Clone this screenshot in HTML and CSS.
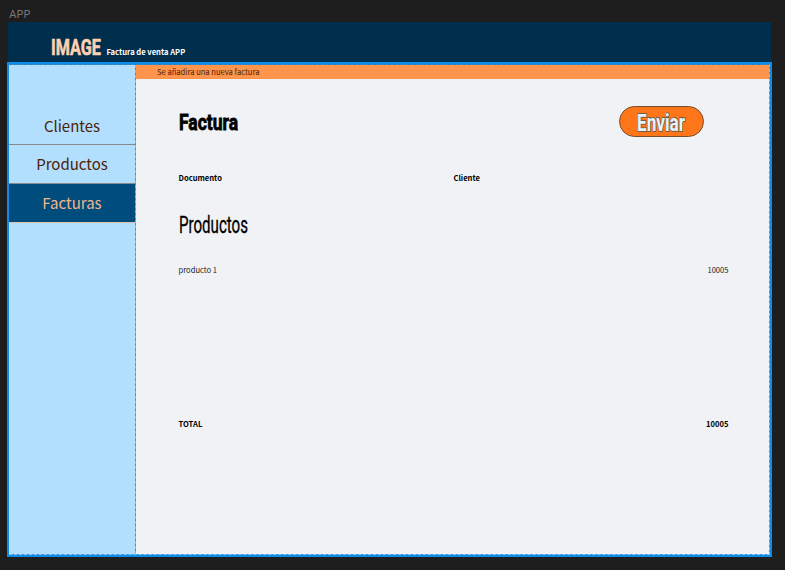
FILE: index.html
```html
<!DOCTYPE html>
<html lang="es">
<head>
<meta charset="utf-8">
<title>APP</title>
<link rel="stylesheet" href="styles.css">
</head>
<body>
<div class="label">APP</div>
<header class="header">
  <svg class="logo" width="52" height="24"><text transform="translate(2 20) scale(.72 1)" textLength="69.4" lengthAdjust="spacingAndGlyphs">IMAGE</text></svg>
  <span class="tagline">Factura de venta APP</span>
</header>
<div class="frame">
  <div class="workspace">
    <nav class="sidebar">
      <a class="item">Clientes</a>
      <a class="item">Productos</a>
      <a class="item active">Facturas</a>
    </nav>
    <main class="main">
      <div class="notice">Se añadira una nueva factura</div>
      <div class="content">
        <div class="heading">
          <svg class="title" width="70" height="31"><text x="0" y="24" textLength="59" lengthAdjust="spacingAndGlyphs">Factura</text></svg>
          <button class="send"><svg width="54" height="29"><text x="3" y="24" textLength="48" lengthAdjust="spacingAndGlyphs">Enviar</text></svg></button>
        </div>
        <div class="fields"><span>Documento</span><span>Cliente</span></div>
        <svg class="subtitle" width="80" height="32"><text x="0" y="24" textLength="69" lengthAdjust="spacingAndGlyphs">Productos</text></svg>
        <div class="row"><span>producto 1</span><span>10005</span></div>
        <div class="row total"><span>TOTAL</span><span>10005</span></div>
      </div>
    </main>
  </div>
</div>
</body>
</html>
```
FILE: styles.css
```css
* { box-sizing: border-box; }
body {
  margin: 0;
  width: 785px;
  height: 570px;
  overflow: hidden;
  background: #1e1e1e;
  font-family: "Noto Sans CJK JP", sans-serif;
  font-size: 7.6px;
  color: #000;
}
svg { display: block; overflow: visible; font-family: Roboto, sans-serif; }
.label {
  height: 22px;
  padding: 7px 0 0 9px;
  font: 11px/14px Inter, sans-serif;
  color: #777;
}
.header {
  display: flex;
  align-items: flex-start;
  width: 763px;
  height: 40px;
  margin-left: 8px;
  padding: 13px 0 0 41px;
  background: #002f4d;
}
.logo {
  font-size: 22.5px;
  font-weight: 700;
  fill: #ffd0b0;
  stroke: #ffd0b0;
  stroke-width: .6px;
}
.tagline { margin: 11px 0 0 5.5px; line-height: 12px; font-weight: 700; color: #fff; }
.frame {
  width: 765px;
  height: 495px;
  margin-left: 7px;
  border: 2px solid #0d8ce9;
}
.workspace {
  display: flex;
  height: 100%;
  border: 1px dashed #8cc4ee;
  border-top-color: #2f80c0;
  border-left: 0;
  background: #2d92df;
}
.sidebar {
  width: 126px;
  padding-top: 41px;
  background: #b3dfff;
}
.item {
  display: block;
  height: 39px;
  border-bottom: 1px solid #85898c;
  font-size: 15px;
  line-height: 39px;
  text-align: center;
  color: #4d2205;
}
.item + .item { line-height: 37px; }
.active { background: #004d7d; color: #f2b48c; border-bottom-color: #e2c1ac; }
.main { flex: 1; border-left: 1px dashed #b9a79c; background: #f0f2f5; background-clip: padding-box; }
.notice {
  height: 14px;
  padding-left: 21px;
  line-height: 14px;
  background: #ff944d;
  color: #4d2205;
}
.content { padding: 27px 40.5px 0 42.5px; }
.heading { display: flex; justify-content: space-between; }
.title { font-size: 22.5px; font-weight: 700; stroke: #000; stroke-width: .8px; }
.send {
  width: 85px;
  height: 31px;
  margin-right: 24.5px;
  padding: 0 0 0 14px;
  border: 1px solid #76502f;
  border-radius: 16px;
  background: #ff751a;
}
.send svg {
  font-size: 23px;
  font-weight: 700;
  fill: #e6f4ff;
  stroke: #555;
  stroke-width: 1.4px;
  paint-order: stroke;
}
.fields {
  display: grid;
  grid-template-columns: 1fr 1fr;
  margin-top: 35px;
  line-height: 12px;
  font-weight: 700;
}
.subtitle { margin-top: 25px; font-size: 23px; stroke: #000; stroke-width: .3px; }
.row {
  display: flex;
  justify-content: space-between;
  margin-top: 23px;
  line-height: 12px;
  color: #222;
}
.total { margin-top: 142px; font-weight: 700; color: #000; }
```
